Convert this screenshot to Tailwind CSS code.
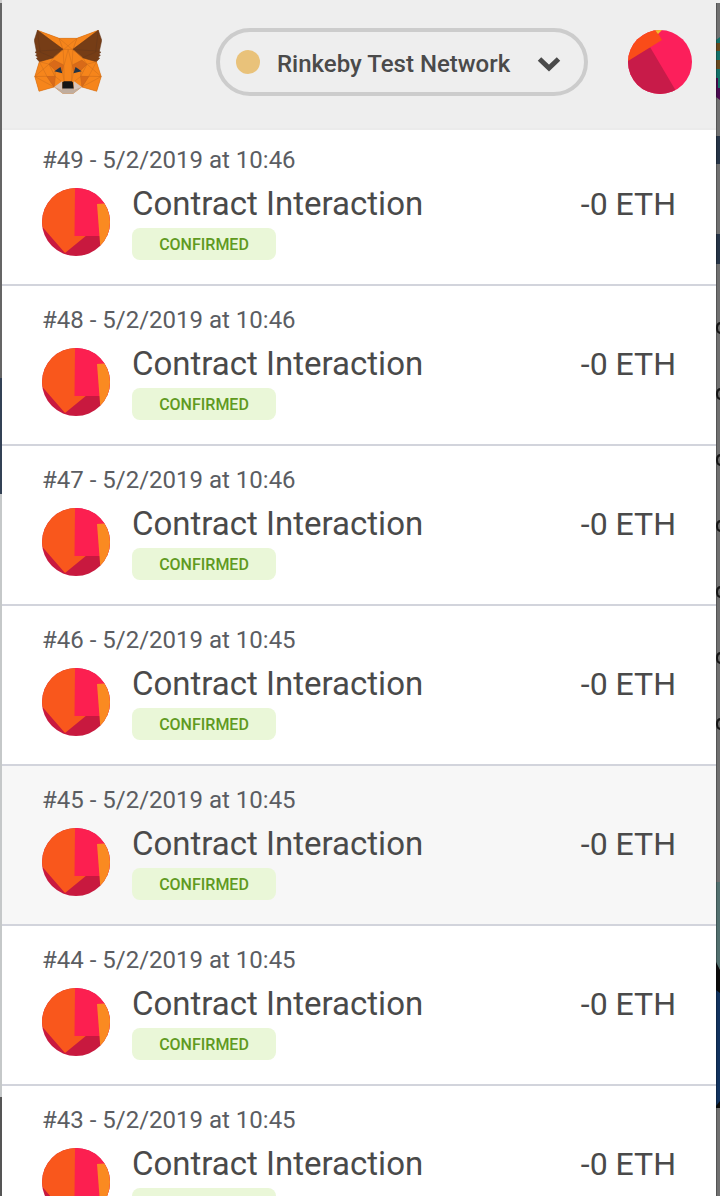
<!DOCTYPE html>
<html lang="en">
<head>
<meta charset="utf-8">
<meta name="viewport" content="width=device-width, initial-scale=1">
<title>Transactions</title>
<script src="https://cdn.jsdelivr.net/npm/@tailwindcss/browser@4"></script>
</head>
<body class="h-screen overflow-hidden bg-[#707070] font-[Roboto,sans-serif] text-[#4a4a4a]">
<div class="flex h-full">
  <div class="flex w-[2px] shrink-0 flex-col bg-[#555]" aria-hidden="true">
    <div class="h-[3px] bg-[#ccc]"></div>
    <div class="h-[375px] bg-[#656565]"></div>
    <div class="h-[116px] bg-[#334155]"></div>
    <div class="h-[603px] bg-[#c5c8c9]"></div>
  </div>
  <div class="flex min-w-0 flex-1 flex-col overflow-hidden bg-white">
    <header class="z-10 flex h-[130px] shrink-0 items-start justify-between border-b-2 border-[#ebebeb] bg-[#eeeeee] pt-7 pr-6 pl-8">
      <svg class="mt-[2px] h-16 w-[68px]" viewBox="31 35 257 238" preserveAspectRatio="none" role="img" aria-label="MetaMask" stroke-width="2" stroke-linejoin="round">
        <path d="M44 36L126 66H193L274 36L267 153L285 208L268 263L212 247L179 272H140L107 247L50 263L34 208L51 153Z" fill="#f6851b"/>
        <g fill="#f6851b" stroke="#d0701c">
          <path d="M193 66L274 36L178 107Z"/><path d="M126 66L44 36L141 107Z"/>
          <path d="M175 165L178 107L193 66H126L141 107L144 165L145 228H173Z"/>
          <path d="M267 153L215 138L231 162L207 208L285 208Z"/>
          <path d="M104 138L51 153L34 208L111 208L88 162Z"/>
          <path d="M88 162L111 208L111 185Z"/><path d="M208 185L207 208L231 162Z"/>
          <path d="M111 185L111 208L141 231L145 228L139 193Z"/><path d="M180 193L173 228L178 231L207 208L208 185Z"/>
          <path d="M34 208L50 263L107 247L80 207Z"/><path d="M238 207L212 247L268 263L285 208Z"/>
        </g>
        <g fill="#d96a18" stroke="#c7651a">
          <path d="M107 247L112 207L80 208Z"/><path d="M207 207L212 247L238 208Z"/>
          <path d="M107 147L88 162L111 185L131 176L139 190L143 165Z"/><path d="M212 147L231 162L208 185L188 176L180 190L176 165Z"/>
        </g>
        <path d="M138 196L108 188L131 173Z M180 196L188 173L211 188Z" fill="#233447"/>
        <path d="M107 247L138 225V262Z M212 247L181 225L180 262Z" fill="#dac5b8"/>
        <path d="M107 247L138 258L138 251H180V258L212 247L179 272H140Z" fill="#c0ad9e"/>
        <path d="M178 229L173 226H145L138 229V253H181Z" fill="#161616"/>
        <g fill="#763d16" stroke="#65361a">
          <path d="M278 114L287 73L274 36L178 107L215 138L267 153L279 140L274 136L282 129L276 124L284 118Z"/>
          <path d="M32 73L40 114L35 118L43 124L37 129L45 136L40 140L51 153L104 138L141 107L44 36Z"/>
        </g>
        <path d="M126 66L175 107M193 66L144 107M141 107H178M51 153L88 162M51 153L80 207M267 153L231 162M267 153L238 207M34 208L88 162M285 208L231 162M145 165L160 107L175 165M34 208L107 247M285 208L212 247M104 138L141 107M215 138L178 107" fill="none" stroke="#cd701c"/>
        <path d="M44 36L54 117L104 138M40 114L141 107M274 36L264 117L215 138M278 114L178 107" fill="none" stroke="#65361a"/>
      </svg>
      <div class="flex items-start gap-10">
        <button type="button" class="flex h-[68px] w-[372px] items-center rounded-full border-4 border-[#cccccc] px-4 text-left">
          <span class="size-6 shrink-0 rounded-full bg-[#e9c27a]"></span>
          <span class="ml-[17px] flex-1 pt-1 text-2xl font-medium whitespace-nowrap">Rinkeby Test Network</span>
          <svg class="mt-1 mr-[7px] h-4 w-6" viewBox="0 0 24 16" aria-hidden="true"><path d="M2.500 3L12 12L21.500 3" fill="none" stroke="#4a4a4a" stroke-width="5"/></svg>
        </button>
        <button type="button" aria-label="Account" class="mt-[2px] rounded-full">
          <svg class="size-16 rounded-full" viewBox="0 0 64 64" aria-hidden="true">
            <rect width="64" height="64" fill="#fc1f5b"/>
            <path d="M22 17L48 61L32 70L0 64V30Z" fill="#c81b49"/>
            <path d="M0 30V0H28L34 10L0 31Z" fill="#fa4c19"/>
            <path d="M27 0H34L30 4Z" fill="#f0bd2b"/>
          </svg>
        </button>
      </div>
    </header>
    <main class="min-h-0 flex-1">
      <ul id="transactions" class="-mt-1"></ul>
    </main>
  </div>
  <svg class="h-[1196px] w-1 shrink-0" viewBox="0 0 4 1196" aria-hidden="true">
    <path fill="#707070" d="M0 0H4V1196H0Z"/>
    <path fill="#eee" d="M0 0H4V3H0Z"/>
    <path fill="#127068" d="M0 40L4 37V98L0 80Z"/>
    <path fill="#66491f" d="M0 43H4V51H0ZM0 60H4V69H0Z"/>
    <path fill="#4b0b50" d="M0 78H2V88H4V100L0 97Z"/>
    <path fill="#263447" d="M0 136H4V164H0ZM0 234H4V264H0Z"/>
    <path fill="none" stroke="#171717" stroke-width="2" d="M5 323Q1 323 1 328T5 333M5 389Q1 389 1 394T5 399M5 455Q1 455 1 460T5 465M5 521Q1 521 1 526T5 531M5 587Q1 587 1 592T5 597M5 653Q1 653 1 658T5 663M5 719Q1 719 1 724T5 729"/>
    <path fill="#52706f" d="M0 882H4V968H0Z"/>
    <path fill="#12335f" d="M0 984H4V1108H0Z"/>
    <path fill="#0c0c0c" d="M0 962L4 970V993L0 990ZM0 1106L4 1101V1108H0Z"/>
    <path fill="#000" fill-opacity=".25" d="M0 3H1V1196H0Z"/>
  </svg>
</div>
<template id="row">
  <li class="flex h-40 flex-col border-b-2 border-[#d2d4dc] pt-[18px] pr-10 pl-10 hover:bg-[#f7f7f7]">
    <p class="text-2xl leading-8 text-[#5b5d62]"></p>
    <div class="mt-3 flex items-start">
      <svg class="size-[68px] shrink-0 rounded-full" viewBox="0 0 68 68" aria-hidden="true">
        <rect width="68" height="68" fill="#c8193f"/>
        <path d="M0 0H34V47H45L23 65L-4 34Z" fill="#f9571c"/>
        <path d="M33 0H68V48H32.500Z" fill="#fc1f50"/>
        <path d="M55 16L68 15V68H59Z" fill="#fa8a21"/>
      </svg>
      <div class="ml-[22px] flex flex-1 flex-col items-start">
        <h2 class="text-[33px] leading-8 whitespace-nowrap">Contract Interaction</h2>
        <span class="mt-2 flex h-8 w-36 items-center justify-center rounded-lg bg-[#eaf7d8] pt-[2px] text-base font-medium text-[#609a1f]">CONFIRMED</span>
      </div>
      <span class="text-[32px] leading-8 whitespace-nowrap">-0 ETH</span>
    </div>
  </li>
</template>
<script>
  const rows = [[49,'10:46'],[48,'10:46'],[47,'10:46'],[46,'10:45'],[45,'10:45'],[44,'10:45'],[43,'10:45']];
  const list = document.getElementById('transactions');
  for (const [nonce, time] of rows) {
    const row = document.getElementById('row').content.cloneNode(true);
    row.querySelector('p').textContent = `#${nonce} - 5/2/2019 at ${time}`;
    if (nonce === 45) row.querySelector('li').classList.add('bg-[#f7f7f7]');
    list.append(row);
  }
</script>
</body>
</html>
